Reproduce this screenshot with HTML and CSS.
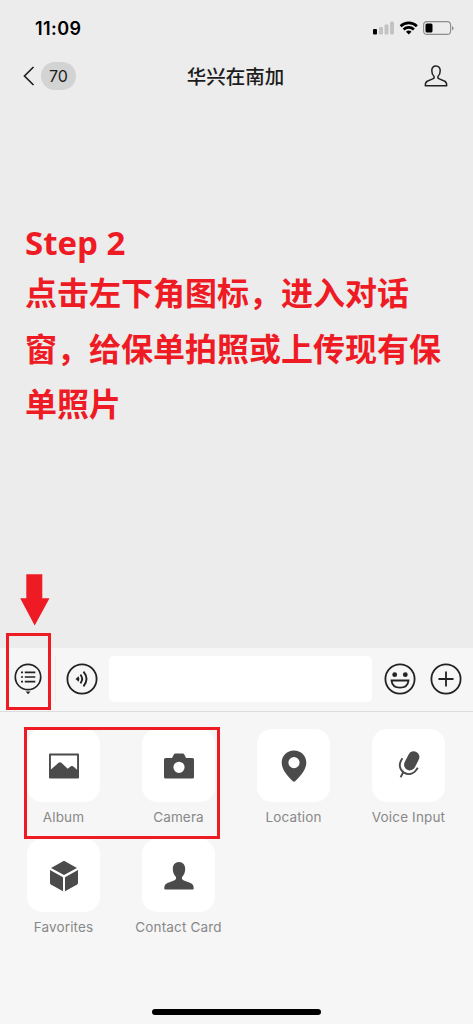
FILE: index.html
```html
<!DOCTYPE html>
<html lang="zh-CN">
<head>
<meta charset="utf-8">
<title>华兴在南加</title>
<link rel="stylesheet" href="styles.css">
</head>
<body>
<div class="phone">
  <header class="status">
    <span class="time">11:09</span>
    <svg class="status-icons" width="82" height="16" viewBox="0 0 82 16">
      <rect x="1" y="9" width="4" height="5.5" rx="1" fill="#000"/>
      <g fill="#c3c3c3"><rect x="7" y="7" width="4" height="7.5" rx="1"/><rect x="12.500" y="4.500" width="4" height="10" rx="1"/><rect x="18" y="1.500" width="4" height="13" rx="1"/></g>
      <g fill="none" stroke="#000" stroke-width="2.700"><path d="M28.600 6.200a11.800 11.800 0 0 1 16.300 0"/><path d="M31.600 9.400a7.500 7.500 0 0 1 10.300 0"/></g>
      <path d="M34 11.700a4 4 0 0 1 5.500 0L36.750 14.500z" fill="#000"/>
      <rect x="51.600" y="1.600" width="27" height="12.800" rx="3.500" fill="none" stroke="#8d8d8d" stroke-width="1.100"/>
      <rect x="53.500" y="3.500" width="7" height="9" rx="1.500" fill="#000"/>
      <path d="M80 6v4.500q1.500-.8 1.500-2.250T80 6z" fill="#8d8d8d"/>
    </svg>
  </header>
  <nav class="navbar">
    <div class="back">
      <svg width="12" height="20" viewBox="0 0 12 20"><path d="M10.500 1 1.500 10l9 9" fill="none" stroke="#222" stroke-width="1.700"/></svg>
      <span class="unread">70</span>
    </div>
    <h1 class="title">华兴在南加</h1>
    <svg class="profile" width="24" height="22" viewBox="0 0 24 22"><path d="M12 1C9.300 1 7.800 3 7.800 5.800c0 2.400.8 4.300 2.100 5.500.7 1.400.2 2-1.200 2.600l-5.500 2.300C1.500 17 1.300 18.400 1.300 20.700h21.400c0-2.300-.2-3.700-1.900-4.500l-5.500-2.300c-1.400-.6-1.900-1.200-1.200-2.600 1.300-1.200 2.100-3.100 2.100-5.500C16.200 3 14.700 1 12 1z" fill="none" stroke="#222" stroke-width="1.500" stroke-linejoin="round"/></svg>
  </nav>
  <main class="chat">
    <p class="step">Step 2</p>
    <p class="guide">点击左下角图标，进入对话<br>窗，给保单拍照或上传现有保<br>单照片</p>
  </main>
  <section class="inputbar">
    <div class="menu">
      <svg width="28" height="33" viewBox="0 0 28 33"><circle cx="14" cy="14" r="12.700" fill="none" stroke="#222" stroke-width="1.700"/><path d="M10.800 9.300h10.500M10.800 14h10.500M10.800 18.700h10.500" stroke="#222" stroke-width="1.700"/><path d="M7 9.300h2M7 14h2M7 18.700h2" stroke="#222" stroke-width="1.700"/><path d="M11.700 28.500h4.800l-2.400 2.800z" fill="#222"/></svg>
    </div>
    <svg class="voice" width="32" height="32" viewBox="0 0 32 32" fill="none" stroke="#222"><circle cx="16" cy="16" r="14.600" stroke-width="1.800"/><path d="M9.500 16l3.200-2.700q1.300 2.700 0 5.400z" fill="#222" stroke="none"/><path d="M14.400 11.700q3.600 4.300 0 8.600M17.500 8.700q6 7.300 0 14.600" stroke-width="1.900"/></svg>
    <div class="field"></div>
    <svg class="emoji" width="32" height="32" viewBox="0 0 32 32" fill="none" stroke="#222" stroke-width="1.800"><circle cx="16" cy="16" r="14.600"/><circle cx="10.700" cy="11.700" r="2.400" fill="#222" stroke="none"/><circle cx="21.300" cy="11.700" r="2.400" fill="#222" stroke="none"/><path d="M7.500 17.500h17c-.4 4.500-3.700 7.200-8.500 7.200s-8.100-2.700-8.500-7.200z"/></svg>
    <svg class="plus" width="32" height="32" viewBox="0 0 32 32" fill="none" stroke="#222" stroke-width="1.800"><circle cx="16" cy="16" r="14.600"/><path d="M16 8.500v15M8.500 16h15"/></svg>
  </section>
  <section class="panel">
    <div class="item"><div class="tile"><svg width="32" height="32" viewBox="0 0 32 32"><path fill-rule="evenodd" d="M2 3.500h28q1 0 1 1v23q0 1-1 1H2q-1 0-1-1v-23q0-1 1-1zM2.900 5.400v14l7.700-6.700q1.400-1 2.800 0l6.300 6 3.100-2.400q1.100-.7 2.200 0l4.100 3.400V5.400z" fill="#4b4b4b"/></svg></div><span class="label">Album</span></div>
    <div class="item"><div class="tile"><svg width="32" height="32" viewBox="0 0 32 32"><path fill-rule="evenodd" d="M2.500 8H9l2-3.700q.4-.8 1.400-.8h7.400q1 0 1.400.8L23 8h6.500q1.500 0 1.500 1.500V27q0 1.500-1.500 1.500h-27Q1 28.500 1 27V9.500Q1 8 2.500 8zM16 11.700a5.600 5.600 0 1 0 0 11.200 5.600 5.600 0 0 0 0-11.200z" fill="#4b4b4b"/></svg></div><span class="label">Camera</span></div>
    <div class="item"><div class="tile"><svg width="32" height="32" viewBox="0 0 32 32"><path fill-rule="evenodd" d="M16 .5C9 .5 3.700 5.700 3.700 12.500c0 6.500 4.800 12.500 10.900 18.600q1.400 1.200 2.800 0C23.500 25 28.300 19 28.300 12.500 28.300 5.700 23 .5 16 .5zM16 7a5.600 5.600 0 1 1 0 11.200A5.600 5.600 0 0 1 16 7z" fill="#4b4b4b"/></svg></div><span class="label">Location</span></div>
    <div class="item"><div class="tile"><svg width="32" height="32" viewBox="0 0 32 32"><path d="M20.700 7 16.800 14.700" stroke="#4b4b4b" stroke-width="11.400" stroke-linecap="round"/><path d="M9.400 8.200C5.500 13.500 6 19.500 11 22.600c5 2.900 10.300 1.100 13.800-4.800M10 22.600l-2.400 4.600" fill="none" stroke="#4b4b4b" stroke-width="1.900"/></svg></div><span class="label">Voice Input</span></div>
    <div class="item"><div class="tile"><svg width="32" height="32" viewBox="0 0 32 32" fill="#4b4b4b"><path d="M16 .8 29 7.900 16 15 3 7.900zM2 9.900l13 7.300v14L2.800 24.400q-.8-.5-.8-1.400zM30 9.900 17 17.200v14l12.200-6.800q.8-.5.8-1.400z"/></svg></div><span class="label">Favorites</span></div>
    <div class="item"><div class="tile"><svg width="32" height="32" viewBox="0 0 32 32"><path d="M16 2c-4 0-6.200 3-6.200 7 0 3.300 1.200 6 3 7.800.8 1.900.1 2.900-1.700 3.700L4.500 23.100C1.800 24.300 1.300 26 1.300 28.800q0 .7.800.7h27.800q.8 0 .8-.7c0-2.800-.5-4.500-3.200-5.700l-6.600-2.600c-1.800-.8-2.500-1.800-1.700-3.700 1.800-1.800 3-4.500 3-7.800 0-4-2.200-7-6.200-7z" fill="#4b4b4b"/></svg></div><span class="label">Contact Card</span></div>
  </section>
  <footer class="home"><div class="home-line"></div></footer>
  <svg class="arrow" width="30" height="52" viewBox="0 0 30 52"><path d="M6.300.3h16v24H29.500L14.700 51.500.200 24.300h6.100z" fill="#ee1b24"/></svg>
  <div class="mark mark-menu"></div>
  <div class="mark mark-media"></div>
</div>
</body>
</html>
```
FILE: styles.css
```css
* { box-sizing: border-box; }
body {
  margin: 0;
  background: #ececec;
  font-family: Inter, "Noto Sans CJK SC", sans-serif;
  color: #1c1c1c;
}
.phone {
  position: relative;
  width: 473px;
  height: 1024px;
  display: flex;
  flex-direction: column;
  overflow: hidden;
}
.status {
  height: 56px;
  padding: 0 19px 0 35px;
  display: flex;
  align-items: center;
  justify-content: space-between;
}
.time { margin-top: 2px; font-size: 18px; font-weight: 600; letter-spacing: 0.400px; color: #000; line-height: 20px; }
.navbar {
  height: 40px;
  padding: 0 25px 0 23px;
  display: grid;
  grid-template-columns: 1fr auto 1fr;
  align-items: center;
}
.back { display: flex; align-items: center; gap: 6px; }
.unread {
  width: 35px;
  height: 28px;
  border-radius: 14px;
  background: #d3d3d3;
  text-align: center;
  font-size: 16px;
  line-height: 29px;
  font-weight: 400;
}
.title {
  margin: 0;
  padding-bottom: 1px;
  font: 500 19.500px/27px "Noto Sans CJK SC", sans-serif;
}
.profile { justify-self: end; }
.chat {
  height: 552px;
  padding: 125px 0 0 25px;
  color: #ee1b24;
  font-weight: 700;
  white-space: nowrap;
}
.step { margin: 0; font-family: "Open Sans", "Noto Sans", sans-serif; font-size: 33px; line-height: 43px; }
.guide { margin: 0; font-family: "Noto Sans CJK SC", sans-serif; font-size: 32px; line-height: 55.500px; }
.inputbar {
  height: 64px;
  padding-bottom: 1px;
  background: #f6f6f6;
  border-bottom: 1px solid #dcdcdc;
  display: flex;
  align-items: center;
}
.menu {
  width: 56px;
  height: 46px;
  padding: 7px 0 0 13.500px;
  border-right: 1px solid #ececec;
}
.voice { margin-left: 10px; }
.field { width: 263px; height: 46px; margin-left: 11px; border-radius: 5px; background: #fff; }
.emoji { margin-left: 12px; }
.plus { margin-left: 13.500px; }
.panel {
  height: 282px;
  padding: 17px 6px 0;
  background: #f6f6f6;
  display: grid;
  grid-template-columns: repeat(4, 115px);
  grid-template-rows: 110px 110px;
}
.item { display: flex; flex-direction: column; align-items: center; }
.tile {
  width: 73px;
  height: 73px;
  border-radius: 15px;
  background: #fff;
  display: flex;
  align-items: center;
  justify-content: center;
}
.label { margin-top: 6px; font-size: 13.500px; line-height: 18px; letter-spacing: 0.150px; color: #888; }
.home { height: 30px; background: #f6f6f6; display: flex; justify-content: center; padding-top: 15px; }
.home-line { width: 169px; height: 6px; border-radius: 3px; background: #000; }
.arrow { position: absolute; left: 20px; top: 574px; }
.mark { position: absolute; border: 3px solid #ee1b24; }
.mark-menu { left: 6px; top: 633px; width: 45px; height: 77px; }
.mark-media { left: 24px; top: 727px; width: 196px; height: 112px; }
```
